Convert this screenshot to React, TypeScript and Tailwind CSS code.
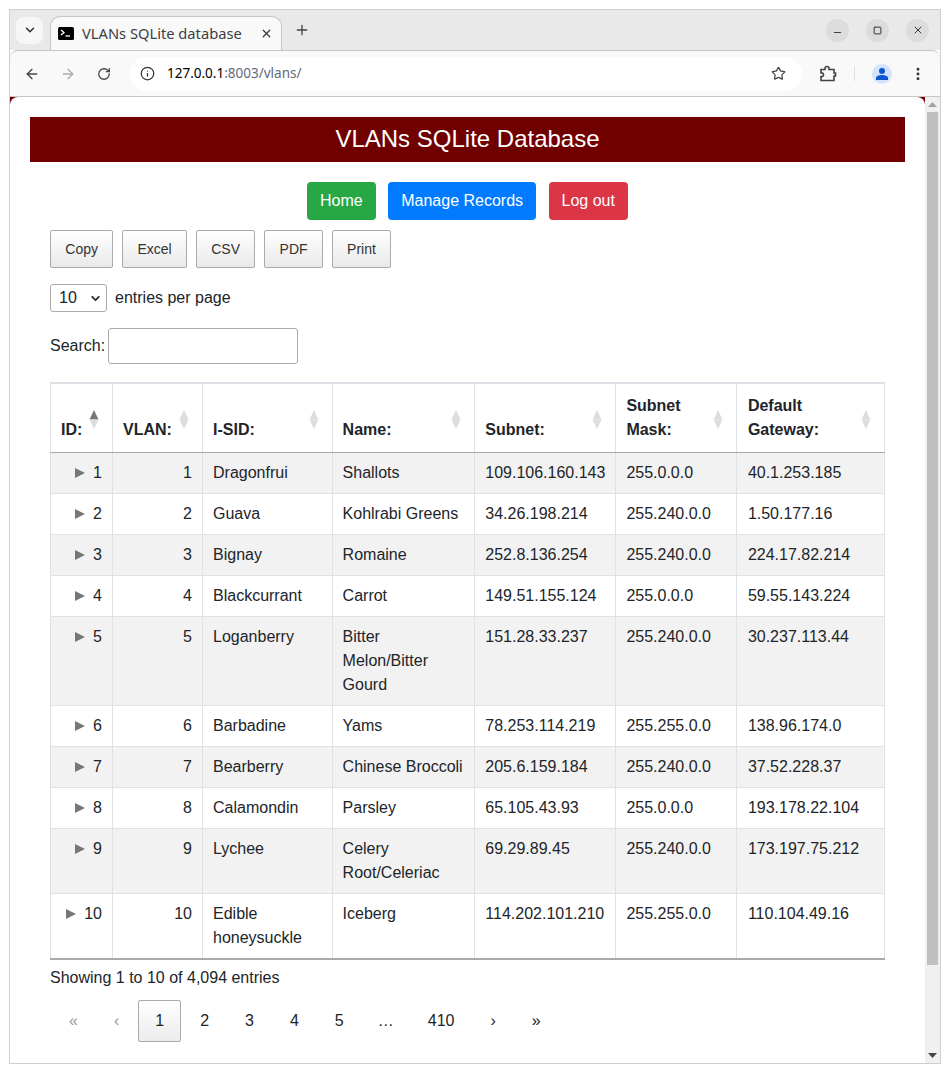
import { ArrowLeft, ArrowRight, ChevronDown, EllipsisVertical, Info, Minus, Plus, RotateCw, Square, Star, X } from "lucide-react";

const rows = [
  [1, "Dragonfrui", "Shallots", "109.106.160.143", "255.0.0.0", "40.1.253.185"],
  [2, "Guava", "Kohlrabi Greens", "34.26.198.214", "255.240.0.0", "1.50.177.16"],
  [3, "Bignay", "Romaine", "252.8.136.254", "255.240.0.0", "224.17.82.214"],
  [4, "Blackcurrant", "Carrot", "149.51.155.124", "255.0.0.0", "59.55.143.224"],
  [5, "Loganberry", "Bitter Melon/Bitter Gourd", "151.28.33.237", "255.240.0.0", "30.237.113.44"],
  [6, "Barbadine", "Yams", "78.253.114.219", "255.255.0.0", "138.96.174.0"],
  [7, "Bearberry", "Chinese Broccoli", "205.6.159.184", "255.240.0.0", "37.52.228.37"],
  [8, "Calamondin", "Parsley", "65.105.43.93", "255.0.0.0", "193.178.22.104"],
  [9, "Lychee", "Celery Root/Celeriac", "69.29.89.45", "255.240.0.0", "173.197.75.212"],
  [10, "Edible honeysuckle", "Iceberg", "114.202.101.210", "255.255.0.0", "110.104.49.16"],
] as const;

function Sort({ active }: { active?: boolean }) {
  return (
    <svg className="absolute right-[13px] top-[26px]" width="10" height="19" viewBox="0 0 10 19">
      <path d="M5 0 L9.5 9.5 L0.5 9.5 Z" fill={active ? "#777" : "#ddd"} />
      <path d="M0.5 9.5 L9.5 9.5 L5 19 Z" fill="#ddd" />
    </svg>
  );
}

const headers = ["ID:", "VLAN:", "I-SID:", "Name:", "Subnet:", "Subnet Mask:", "Default Gateway:"];

function Pg({ children, muted, current, className = "" }: { children: React.ReactNode; muted?: boolean; current?: boolean; className?: string }) {
  return (
    <span
      className={`ml-[2px] box-border flex h-[42px] items-center justify-center rounded-[2px] border px-4 ${
        current ? "border-[#aaa] bg-gradient-to-b from-white to-[#ececec] text-[#212529]" : "border-transparent"
      } ${muted ? "text-[#999]" : "text-[#212529]"} ${className}`}
    >
      {children}
    </span>
  );
}

export default function App() {
  return (
    <div className="h-[1073px] w-[950px] overflow-hidden bg-white pl-[9px] pt-[9px] font-['Liberation_Sans',Arial,sans-serif] text-base text-[#212529]">
      <div className="flex h-[1055px] w-[932px] flex-col overflow-hidden border border-[#cfcfcf]">
        {/* Tab strip */}
        <div className="flex h-[40px] shrink-0 items-center bg-[#e9e9e9] font-['Noto_Sans',sans-serif]">
          <div className="ml-[6px] flex h-[27px] w-[27px] items-center justify-center rounded-[8px] bg-[#f6f6f6]">
            <ChevronDown size={14} strokeWidth={2.6} color="#333" />
          </div>
          <div className="ml-[7px] flex h-[34px] w-[232px] self-end items-center rounded-t-[10px] border border-b-0 border-[#c6c6c6] bg-[#f9f9f9] pl-[7px]">
            <svg width="16" height="13" viewBox="0 0 16 13" className="shrink-0">
              <rect width="16" height="13" rx="1.5" fill="#000" />
              <path d="M3 3 L6 5.5 L3 8" stroke="#fff" strokeWidth="1.3" fill="none" />
              <path d="M7.5 9 H12" stroke="#fff" strokeWidth="1.3" />
            </svg>
            <span className="ml-2 whitespace-nowrap text-[14.7px] text-[#3c4043]">VLANs SQLite database</span>
            <X size={13} strokeWidth={2.2} color="#333" className="ml-[18px] shrink-0" />
          </div>
          <Plus size={16} strokeWidth={2} color="#444" className="ml-[12px]" />
          <div className="ml-auto mr-[11px] flex gap-[17px]">
            <div className="flex h-[23px] w-[23px] items-center justify-center rounded-full bg-[#dcdcdc]">
              <Minus size={11} color="#333" className="mt-[5px]" />
            </div>
            <div className="flex h-[23px] w-[23px] items-center justify-center rounded-full bg-[#dcdcdc]">
              <Square size={9} color="#333" strokeWidth={2.6} />
            </div>
            <div className="flex h-[23px] w-[23px] items-center justify-center rounded-full bg-[#dcdcdc]">
              <X size={12} color="#333" strokeWidth={2} />
            </div>
          </div>
        </div>
        {/* Toolbar */}
        <div className="flex h-[47px] shrink-0 items-center rounded-t-[8px] border-b border-t border-[#c6c6c6] bg-[#f9f9f9]">
          <ArrowLeft size={16} strokeWidth={2} color="#444" className="ml-[14px]" />
          <ArrowRight size={16} strokeWidth={2} color="#aaa" className="ml-[20px]" />
          <RotateCw size={14} strokeWidth={2.2} color="#444" className="ml-[21px]" />
          <div className="ml-[19px] flex h-[34px] w-[672px] items-center rounded-full bg-white pl-[10px] font-['Noto_Sans',sans-serif] text-[13.5px]">
            <Info size={15} strokeWidth={2} color="#333" />
            <span className="ml-[12px] text-black">127.0.0.1</span>
            <span className="text-[#5f6b7a]">:8003/vlans/</span>
            <Star size={15} strokeWidth={2} color="#444" className="ml-auto mr-[16px]" />
          </div>
          <svg width="18" height="18" viewBox="0 0 18 18" className="ml-[17px]" fill="none" stroke="#444" strokeWidth="1.6">
            <path d="M2 4.5 H6 V3.5 A2 2 0 0 1 10 3.5 V4.5 H15 V8 H16.5 V11 H15 V15.5 H2 V11.5 H3.5 A2 2 0 0 0 3.5 8 H2 Z" />
          </svg>
          <div className="ml-[17px] h-[15px] w-px bg-[#e0e0e0]" />
          <div className="ml-[17px] flex h-[20px] w-[20px] items-center justify-center rounded-full bg-[#d3e3fd]">
            <svg width="14" height="14" viewBox="0 0 14 14" fill="#0b57d0">
              <circle cx="7" cy="4" r="3" />
              <path d="M1 13 V11 C1 9 4 8 7 8 C10 8 13 9 13 11 V13 Z" />
            </svg>
          </div>
          <EllipsisVertical size={16} strokeWidth={2.4} color="#333" className="ml-[18px]" />
        </div>
        {/* Viewport */}
        <div className="relative flex min-h-0 flex-1">
          <div className="min-w-0 flex-1 bg-[#700000]">
            <div className="h-full rounded-tl-[8px] rounded-tr-[8px] bg-white pl-[20px] pr-[20px] pt-[20px]">
              <h1 className="flex h-[45px] items-center justify-center bg-[#700000] pb-[2px] text-2xl text-white">VLANs SQLite Database</h1>
              <div className="mt-[20px] flex h-[38px] justify-center gap-[12.5px]">
                <span className="flex items-center rounded-[4px] bg-[#28a745] px-[13px] text-white">Home</span>
                <span className="flex items-center rounded-[4px] bg-[#007bff] px-[13px] text-white">Manage Records</span>
                <span className="flex items-center rounded-[4px] bg-[#dc3545] px-[13px] text-white">Log out</span>
              </div>
              <div className="pl-[20px]">
                <div className="mt-[10px] flex h-[38px] gap-[9px] text-[14px]">
                  {["Copy", "Excel", "CSV", "PDF", "Print"].map((b) => (
                    <span key={b} className="flex items-center rounded-[2px] border border-[#aaa] bg-gradient-to-b from-white to-[#e9e9e9] px-[14.28px] text-[#333]">
                      {b}
                    </span>
                  ))}
                </div>
                <div className="mt-[16px] flex h-[28px] items-center">
                  <span className="box-border flex h-[28px] w-[57px] items-center justify-between rounded-[3px] border border-[#aaa] bg-white pl-[8px] pr-[4px]">
                    10
                    <ChevronDown size={13} strokeWidth={3.5} color="#333" />
                  </span>
                  <span className="ml-[8px]">entries per page</span>
                </div>
                <div className="mt-[16px] flex h-[36px] items-center">
                  <span>Search:</span>
                  <span className="ml-[3px] box-border h-[36px] w-[190px] rounded-[3px] border border-[#aaa] bg-white" />
                </div>
                <table className="mt-[18px] w-[834.2px] table-fixed border-collapse leading-6">
                  <colgroup>
                    <col className="w-[62px]" />
                    <col className="w-[90px]" />
                    <col className="w-[129.6px]" />
                    <col className="w-[142.7px]" />
                    <col className="w-[141.1px]" />
                    <col className="w-[121px]" />
                    <col className="w-[147.8px]" />
                  </colgroup>
                  <thead>
                    <tr className="h-[69px]">
                      {headers.map((h) => (
                        <th key={h} className={`relative border border-[#dee2e6] border-b-[#aaa] border-t-2 pb-[10px] pr-[28px] pt-[9px] text-left align-bottom font-bold ${h === "Default Gateway:" ? "pl-[10.5px]" : "pl-[10px]"}`}>
                          {h}
                          <Sort active={h === "ID:"} />
                        </th>
                      ))}
                    </tr>
                  </thead>
                  <tbody>
                    {rows.map((r, i) => (
                      <tr key={r[0]} className={i % 2 === 0 ? "bg-[#f2f2f2]" : "bg-white"}>
                        <td className={`border border-[#dee2e6] px-[10px] py-2 text-right align-top ${i === 9 ? "border-b-2 border-b-[#aaa]" : ""}`}>
                          <span className="inline-flex items-center gap-[8px]">
                            <svg width="10" height="10" viewBox="0 0 10 10">
                              <path d="M0 0 L10 5 L0 10 Z" fill="#777" />
                            </svg>
                            {r[0]}
                          </span>
                        </td>
                        <td className={`border border-[#dee2e6] px-[10px] py-2 text-right align-top ${i === 9 ? "border-b-2 border-b-[#aaa]" : ""}`}>{r[0]}</td>
                        {r.slice(1).map((c, j) => (
                          <td key={j} className={`border border-[#dee2e6] py-2 pr-[10px] text-left align-top ${j === 4 ? "pl-[10.5px]" : "pl-[10px]"} ${i === 9 ? "border-b-2 border-b-[#aaa]" : ""}`}>
                            {c}
                          </td>
                        ))}
                      </tr>
                    ))}
                  </tbody>
                </table>
                <div className="mt-[6px] leading-6">Showing 1 to 10 of 4,094 entries</div>
                <div className="mt-[10px] flex">
                  <Pg muted className="ml-[2px]">«</Pg>
                  <Pg muted>‹</Pg>
                  <Pg current>1</Pg>
                  <Pg>2</Pg>
                  <Pg>3</Pg>
                  <Pg>4</Pg>
                  <Pg>5</Pg>
                  <Pg className="!px-[14px]">…</Pg>
                  <Pg>410</Pg>
                  <Pg>›</Pg>
                  <Pg>»</Pg>
                </div>
              </div>
            </div>
          </div>
          {/* Scrollbar */}
          <div className="flex w-[15px] shrink-0 flex-col items-center bg-[#f0f0f0]">
            <svg width="9" height="5" viewBox="0 0 9 5" className="mt-[5px]">
              <path d="M4.5 0 L9 5 H0 Z" fill="#a3a3a3" />
            </svg>
            <div className="mt-[5px] h-[853px] w-[11px] bg-[#bfbfbf]" />
            <svg width="9" height="5" viewBox="0 0 9 5" className="mt-auto mb-[5px]">
              <path d="M0 0 H9 L4.5 5 Z" fill="#444" />
            </svg>
          </div>
        </div>
      </div>
    </div>
  );
}
